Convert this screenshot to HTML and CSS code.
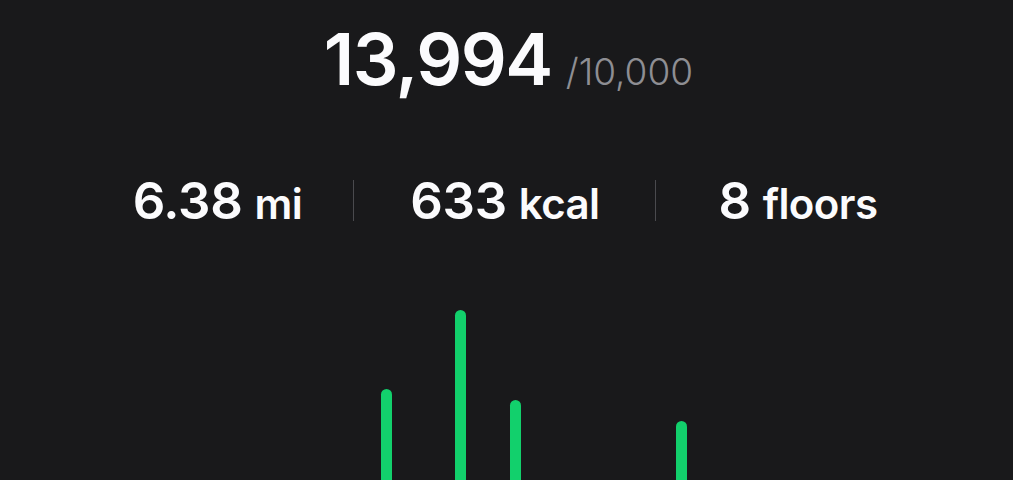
FILE: index.html
```html
<!DOCTYPE html>
<html lang="en">
  <head>
    <meta charset="UTF-8" />
    <meta name="viewport" content="width=device-width, initial-scale=1.0" />
    <title>Steps</title>
    <link rel="stylesheet" href="styles.css">
  </head>
  <body>
    <div class="today">
      <div class="steps">
        <span class="steps-count">13,994</span>
        <span class="steps-goal">/10,000</span>
      </div>

      <div class="stats">
        <div class="stat"><span class="stat-value">6.38</span> <span class="stat-unit">mi</span></div>
        <div class="divider"></div>
        <div class="stat"><span class="stat-value">633</span> <span class="stat-unit">kcal</span></div>
        <div class="divider"></div>
        <div class="stat"><span class="stat-value">8</span> <span class="stat-unit">floors</span></div>
      </div>

      <!-- steps per hour, 24 slots -->
      <div class="chart">
        <div class="slot"></div>
        <div class="slot"></div>
        <div class="slot"></div>
        <div class="slot"></div>
        <div class="slot"></div>
        <div class="slot"><div class="bar" style="height: 110px"></div></div>
        <div class="slot"></div>
        <div class="slot"></div>
        <div class="slot"></div>
        <div class="slot"><div class="bar" style="height: 189px"></div></div>
        <div class="slot"></div>
        <div class="slot"></div>
        <div class="slot"><div class="bar" style="height: 99px"></div></div>
        <div class="slot"></div>
        <div class="slot"></div>
        <div class="slot"></div>
        <div class="slot"></div>
        <div class="slot"></div>
        <div class="slot"></div>
        <div class="slot"></div>
        <div class="slot"></div>
        <div class="slot"><div class="bar" style="height: 78px"></div></div>
        <div class="slot"></div>
        <div class="slot"></div>
      </div>
    </div>
  </body>
</html>
```

FILE: styles.css
```css
body {
  margin: 0;
  height: 100vh;
  overflow: hidden;
  background-color: #19191b;
  color: #fbfbfd;
  font-family: Inter, "Noto Sans", sans-serif;
}

.today {
  display: flex;
  flex-direction: column;
  align-items: center;
}

.steps {
  margin-top: 23px;
  margin-left: 4px;
  line-height: 1;
  display: flex;
  align-items: baseline;
  gap: 14px;
}

.steps-count {
  font-size: 72px;
  font-weight: 600;
  letter-spacing: -1.5px;
}

.steps-goal {
  font-size: 37px;
  font-weight: 300;
  color: #8e8e93;
}

.stats {
  margin-top: 80px;
  margin-right: 3px;
  display: flex;
  align-items: center;
  line-height: 1;
}

.stat {
  padding: 0 56px;
  display: flex;
  align-items: baseline;
  gap: 12px;
}

.stat:first-child {
  padding-left: 0;
  padding-right: 51px;
}

.stat:last-child {
  padding-left: 62px;
  padding-right: 0;
}

.divider {
  width: 1px;
  height: 41px;
  background-color: #4a4a4e;
}

.stat-value {
  font-size: 51px;
  font-weight: 600;
  letter-spacing: -0.3px;
}

.stat-unit {
  font-size: 42px;
  font-weight: 600;
  letter-spacing: -0.6px;
}

.chart {
  margin-top: 73px;
  width: 443px;
  height: 200px;
  display: grid;
  grid-template-columns: repeat(24, 1fr);
}

.slot {
  display: flex;
  justify-content: center;
  align-items: flex-end;
}

.bar {
  width: 11px;
  background-color: #12d06c;
  border-radius: 6px 6px 0 0;
}
```
